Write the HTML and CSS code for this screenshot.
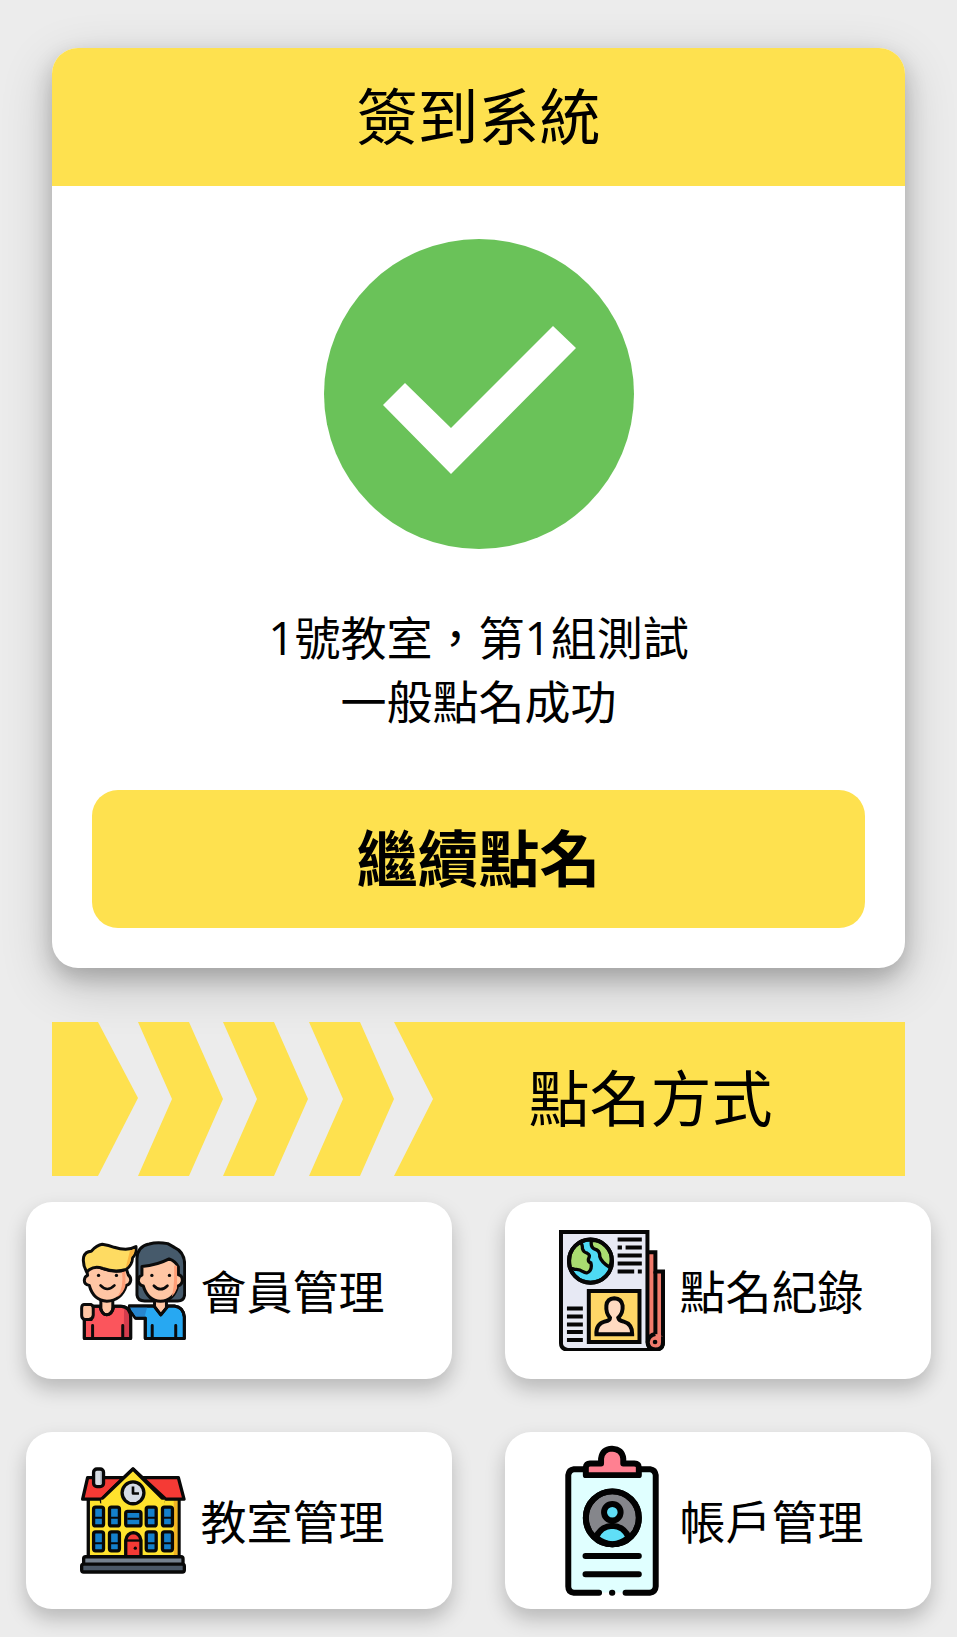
FILE: index.html
```html
<!DOCTYPE html>
<html lang="zh-Hant">
<head>
<meta charset="utf-8">
<meta name="viewport" content="width=device-width, initial-scale=1">
<title>簽到系統</title>
<link rel="stylesheet" href="styles.css">
</head>
<body>
<main class="page">
  <section class="card">
    <header class="card-header"><h1 class="title">簽到系統</h1></header>
    <div class="card-body">
      <svg class="status" viewBox="0 0 310 310" role="img" aria-label="成功">
        <circle cx="155" cy="155" r="155" fill="#6ac259"/>
        <path d="M59 166 81 144 127 189 229 87 252 109 127 235Z" fill="#fff"/>
      </svg>
      <p class="message">1號教室，第1組測試<br>一般點名成功</p>
      <button class="primary" type="button">繼續點名</button>
    </div>
  </section>

  <div class="banner">
    <svg class="arrows" viewBox="0 0 382 154" aria-hidden="true">
      <g fill="#fee14f">
        <path d="M0 0H46L86 76 46 154H0Z"/>
        <path d="M86 0H137L171 77 137 154H86L120 77Z"/>
        <path d="M171 0H222L256 77 222 154H171L205 77Z"/>
        <path d="M257 0H308L342 77 308 154H257L291 77Z"/>
        <path d="M342 0H382V154H342L381 77Z"/>
      </g>
    </svg>
    <h2 class="banner-title">點名方式</h2>
  </div>

  <nav class="menu">
    <a class="menu-item" href="#members">
      <svg class="icon" viewBox="57 62 320 300" aria-hidden="true" stroke="#0b0b0b" stroke-width="9" stroke-linejoin="round" stroke-linecap="round">
        <path fill="#465a6b" d="M229 225V115Q230 78 266 71Q290 64 322 70Q333 76 343 82Q373 95 373 135V222Q372 244 350 243H252Q231 243 229 225Z"/>
        <path fill="#ffc6a4" d="M282 238H318V268L300 287 282 268Z"/>
        <path fill="#ffc6a4" d="M244 139Q290 135 326 116Q346 124 354 140V164Q366 166 366 181Q365 194 352 198Q340 242 300 244Q262 243 248 198Q234 194 233 181Q234 168 244 165Z"/>
        <path d="M341 137H350V205Q345 220 334 230Q343 200 341 137Z" fill="#ff9d76" stroke="none"/>
        <path fill="#27a8f2" d="M206 258H280L301 285 323 258H342Q369 261 372 291V356H254V295H224L206 270Z"/>
        <path d="M207 261H260L252 291H226Z" fill="#2786cf" stroke="none"/>
        <path fill="none" d="M206 258H280L301 285 323 258H342Q369 261 372 291V356H254V295H227M275 317V356M346 317V356"/>
        <path fill="#ffc6a4" d="M120 240H156V269Q152 285 138 285Q122 284 120 268Z"/>
        <path fill="#fb555c" d="M95 259H117Q123 285 138 285Q154 284 159 259H180Q209 260 210 294V356H70V299H91Z"/>
        <path fill="#d43c4d" stroke="none" d="M190 265Q207 272 206 298V353H189Z"/>
        <path fill="none" d="M95 259H117Q123 285 138 285Q154 284 159 259H180Q209 260 210 294V356H70V299M95 317V356M186 317V356"/>
        <path fill="#ffc6a4" d="M69 254H91Q98 257 97 269V286Q96 298 84 299H70Q62 296 62 286V264Q62 255 69 254Z"/>
        <path fill="#ffc6a4" d="M77 148Q107 133 126 145Q153 157 188 151L196 143L203 165Q211 170 210 182Q208 193 197 196Q182 242 138 244Q97 241 85 196Q70 193 70 181Q71 168 80 166Z"/>
        <path fill="#ff9d76" stroke="none" d="M184 156 194 151 194 198Q188 220 169 232Q190 200 184 156Z"/>
        <path fill="#fedb62" d="M77 155Q64 134 68 110Q73 94 91 93Q108 74 124 72Q144 75 160 81Q201 94 226 79Q228 101 216 111Q214 137 196 148Q163 158 126 145Q103 136 86 148Z"/>
        <path fill="#fbb540" stroke="none" d="M208 91 222 86Q223 101 212 110Q210 132 195 143Z"/>
        <g fill="#0b0b0b" stroke="none"><circle cx="113" cy="166" r="5"/><circle cx="167" cy="166" r="5"/><circle cx="274" cy="166" r="5"/><circle cx="327" cy="166" r="5"/></g>
        <path fill="none" stroke-width="8" d="M119 196Q139 218 161 196M280 197Q300 218 321 197"/>
      </svg>
      <span>會員管理</span>
    </a>
    <a class="menu-item" href="#records">
      <svg class="icon" viewBox="57 59 320 368" aria-hidden="true" stroke="#060606" stroke-width="12">
        <path fill="#f07b6c" d="M318 126H348V184H371V398Q371 420 348 420H318Z"/>
        <path fill="none" d="M348 184V374"/>
        <path fill="#e7e9f4" d="M63 65H324V397Q325 415 341 421H83Q63 418 63 401Z"/>
        <path fill="#f07b6c" d="M371 380V398Q371 420 348 420Q325 418 325 397Q328 376 348 373"/>
        <circle cx="347" cy="397" r="7" fill="#060606" stroke="none"/>
        <circle cx="152" cy="153" r="65" fill="#4edaf4"/>
        <path fill="#a9dd70" stroke-width="10" d="M121 96Q128 101 128 116Q131 126 142 129Q153 134 146 146Q144 155 153 158Q157 170 151 181Q143 194 128 184Q119 176 104 178L91 173Q80 117 121 96ZM155 90Q151 111 165 117Q181 121 180 139Q184 155 210 172Q226 126 191 101Q176 89 155 90Z"/>
        <circle cx="152" cy="153" r="65" fill="none"/>
        <path fill="none" d="M234 88H307M234 112H247M258 112H307M234 136H307M234 160H307M234 184H284M295 184H307M81 296H129M81 320H129M81 344H129M81 367H129M81 391H129"/>
        <path fill="#fed667" d="M147 243H300V397H147Z"/>
        <path fill="#ffdac1" d="M211 324Q198 310 200 287Q202 266 224 265Q246 266 249 287Q251 310 236 324Q238 333 251 335Q279 343 278 374H170Q168 343 196 335Q211 333 211 324Z"/>
      </svg>
      <span>點名紀錄</span>
    </a>
    <a class="menu-item" href="#classrooms">
      <svg class="icon" viewBox="57 54 320 322" aria-hidden="true" stroke="#080808" stroke-width="10" stroke-linejoin="round">
        <path fill="#ffe22d" d="M82 145H356V325H82Z"/>
        <path fill="#f3b322" stroke="none" d="M340 153H351V320H340Z"/>
        <path fill="#f53a35" d="M80 86H354L371 151H316L217 60 152 122 124 151H65Z"/>
        <path fill="#ffe22d" d="M217 60 308 151V160H122V151Z"/>
        <path fill="#ffe22d" stroke="none" d="M121 153H313V168H121Z"/>
        <rect x="98" y="60" width="30" height="53" rx="10" fill="#d8dde3"/>
        <path fill="none" stroke="#9ba5b1" stroke-width="4" d="M121 68V105"/>
        <circle cx="217" cy="132" r="33" fill="#d6dce7"/>
        <path fill="none" stroke-width="8" d="M217 113V134H235"/>
        <g fill="#1480cb">
          <rect x="98" y="175" width="30" height="57" rx="6"/><rect x="146" y="175" width="30" height="57" rx="6"/><rect x="257" y="175" width="30" height="57" rx="6"/><rect x="306" y="175" width="30" height="57" rx="6"/>
          <rect x="98" y="250" width="30" height="57" rx="6"/><rect x="146" y="250" width="30" height="57" rx="6"/><rect x="257" y="250" width="30" height="57" rx="6"/><rect x="306" y="250" width="30" height="57" rx="6"/>
          <rect x="195" y="188" width="46" height="44" rx="6"/>
        </g>
        <path fill="none" stroke-width="6" d="M98 207H128M146 207H176M257 207H287M306 207H336M98 284H128M146 284H176M257 284H287M306 284H336M200 210H236"/>
        <path fill="#f53a35" d="M195 325V275Q199 253 218 252Q237 253 241 275V325Z"/>
        <path fill="none" stroke-width="7" d="M195 276H241"/>
        <circle cx="224" cy="299" r="5" fill="#080808" stroke="none"/>
        <rect x="68" y="325" width="300" height="24" rx="6" fill="#75818e"/>
        <rect x="62" y="347" width="310" height="24" rx="6" fill="#4b5867"/>
      </svg>
      <span>教室管理</span>
    </a>
    <a class="menu-item" href="#accounts">
      <svg class="icon" viewBox="57 46 320 456" aria-hidden="true" stroke="#020202" stroke-width="18" stroke-linejoin="round" stroke-linecap="round">
        <path fill="#e0ffff" stroke="none" d="M85 119H350V491H85Z"/>
        <path fill="none" d="M178 492H102Q85 490 85 473V137Q87 121 102 119H332Q347 121 349 137V473Q348 490 331 492H258M217 492H218"/>
        <path fill="#ff8091" d="M138 137V113Q139 103 151 102H184V87Q188 58 217 57Q248 59 251 87V102H284Q298 103 298 113V137Z"/>
        <circle cx="218" cy="266" r="80" fill="#85868b"/>
        <path fill="#60dff7" d="M168 325Q184 291 218 290Q252 291 268 325Q218 366 168 325Z"/>
        <circle cx="218" cy="266" r="80" fill="none"/>
        <circle cx="218" cy="249" r="25" fill="#60dff7"/>
        <path fill="none" d="M137 381H298M137 436H298"/>
      </svg>
      <span>帳戶管理</span>
    </a>
  </nav>
</main>
</body>
</html>
```
FILE: styles.css
```css
* { box-sizing: border-box; }

body {
  margin: 0;
  background: #ececec;
  color: #000;
  font-family: "Open Sans", "Noto Sans CJK TC", sans-serif;
  font-size: 46px;
  line-height: 64px;
}

h1, h2, p { margin: 0; }

.page { padding: 48px 26px 28px; }

.card {
  margin: 0 26px;
  overflow: hidden;
  border-radius: 26px;
  background: #fff;
  box-shadow: 0 10px 22px rgba(0, 0, 0, .2), 0 16px 52px rgba(0, 0, 0, .19);
}

.card-header {
  padding: 29px 40px;
  background: #fee14f;
  text-align: center;
}

.title, .banner-title, .primary {
  font-size: 61px;
  line-height: 80px;
}

.title, .banner-title { font-weight: 400; }

.card-body {
  display: flex;
  flex-direction: column;
  align-items: center;
  padding: 53px 40px 40px;
}

.status { width: 310px; height: 310px; }

.message {
  margin: 56px 0 57px;
  text-align: center;
}

.primary {
  width: 100%;
  padding: 29px;
  border: 0;
  border-radius: 26px;
  background: #fee14f;
  color: #000;
  font-family: inherit;
  font-weight: 700;
  cursor: pointer;
}

.banner {
  display: flex;
  margin: 54px 26px 26px;
}

.arrows {
  flex: none;
  width: 382px;
  height: 154px;
}

.banner-title {
  flex: 1;
  padding: 37px 38px 37px 0;
  background: #fee14f;
  text-align: center;
}

.menu {
  display: grid;
  grid-template-columns: 1fr 1fr;
  gap: 53px;
}

.menu-item {
  display: flex;
  align-items: center;
  justify-content: center;
  gap: 15px;
  height: 177px;
  padding-right: 14px;
  border-radius: 26px;
  background: #fff;
  box-shadow: 0 10px 20px rgba(0, 0, 0, .22);
  color: #000;
  text-decoration: none;
  white-space: nowrap;
}

.icon {
  flex: none;
  width: 106px;
}
```
